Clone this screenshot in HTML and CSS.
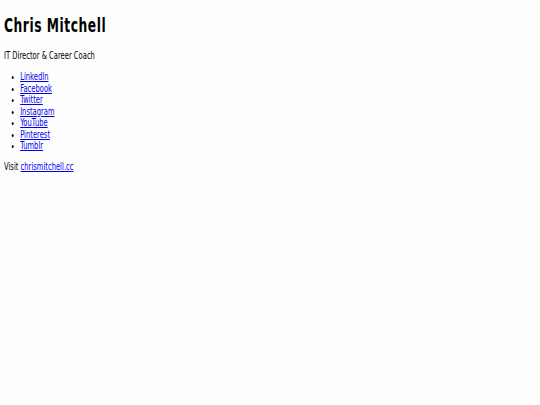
FILE: index.html
```html
<!DOCTYPE html>
<html>
	<head>
		<meta charset="UTF-8">
		<title>Chris Mitchell</title>
		<link rel="stylesheet" href="styles.css">
	</head>
	<body>
		<div class="profile">
			<h1 class="name">Chris Mitchell</h1>
			<p class="tagline">IT Director &amp; Career Coach</p>
			<ul class="links">
				<li><a href="#">LinkedIn</a></li>
				<li><a href="#">Facebook</a></li>
				<li><a href="#">Twitter</a></li>
				<li><a href="#">Instagram</a></li>
				<li><a href="#">YouTube</a></li>
				<li><a href="#">Pinterest</a></li>
				<li><a href="#">Tumblr</a></li>
			</ul>
			<p class="visit">Visit <a href="#">chrismitchell.cc</a></p>
		</div>
	</body>
</html>
```
FILE: styles.css
```css
*{
	margin: 0;
	padding: 0;
}
body{
	margin: 4px;
	font: 10.5px/11.45px "DejaVu Sans",sans-serif;
	color: #000;
	background-color: #fdfdfd;
}
/* narrow, tall type like the original condensed face */
div.profile{
	transform: scaleX(0.645);
	transform-origin: 0 0;
}
div.profile h1.name{
	font-size: 19px;
	line-height: 22px;
	font-weight: bold;
	letter-spacing: 0.85px;
	margin: 10px 0 14px;
}
div.profile p.tagline{
	margin-bottom: 10px;
}
div.profile ul.links{
	padding-left: 25px;
	margin-bottom: 9px;
}
div.profile a{
	color: #00e;
}
```
